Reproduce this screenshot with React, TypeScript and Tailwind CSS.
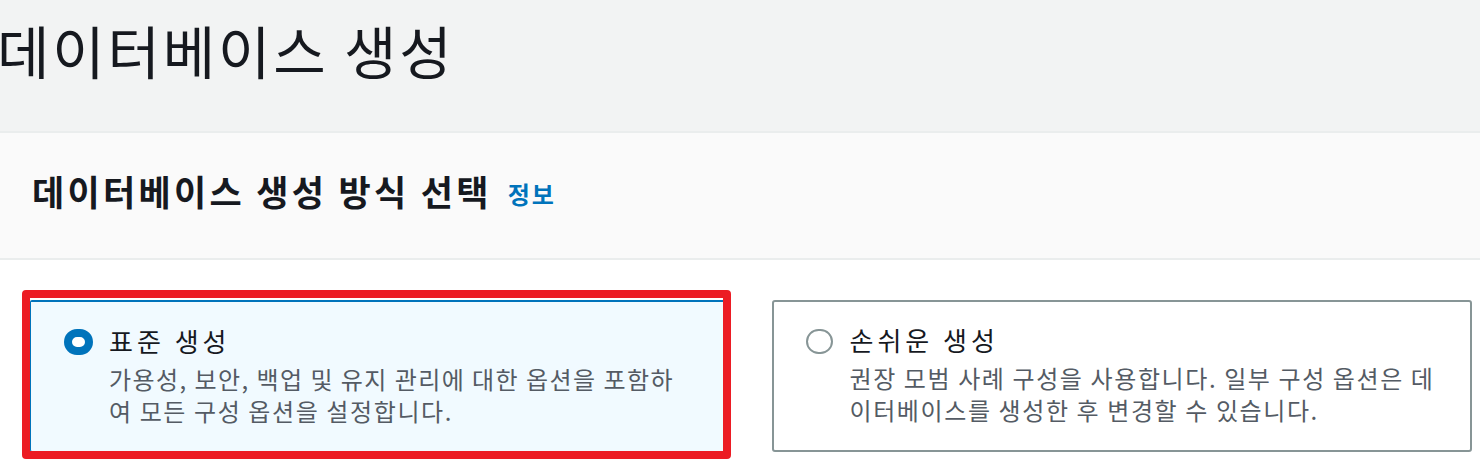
import React from "react";

export default function App() {
  return (
    <div className="w-[1480px] h-[463px] overflow-hidden bg-white font-['Noto_Sans_CJK_KR','Noto_Sans',sans-serif] text-[#16191f]">
      <div className="h-[131px] bg-[#f2f3f3] flex items-center pb-[32px]">
        <h1 className="ml-[-3px] text-[57px] leading-none font-normal tracking-[2.8px] whitespace-nowrap">데이터베이스 생성</h1>
      </div>
      <div className="h-[129px] bg-[#fafafa] border-t-2 border-b-2 border-[#eaeded] flex items-center px-[32px] pb-[10px]">
        <h2 className="text-[35px] leading-none font-bold tracking-[3.3px] whitespace-nowrap">데이터베이스 생성 방식 선택</h2>
        <span className="ml-[16px] text-[24px] leading-none font-bold text-[#0073bb] tracking-[2px] mt-[6px]">정보</span>
      </div>
      <div className="pt-[40px] pl-[30px] pr-[8px] grid grid-cols-2 gap-[41px]">
        <div className="relative h-[152px] bg-[#f1faff] border border-t-2 border-[#0073bb] rounded-[2px]">
          <div className="flex pl-[33px] pt-[26px]">
            <div className="w-[29px] h-[26px] rounded-full border-[8px] border-[#0073bb] bg-white shrink-0 mt-[1px]" />
            <div className="ml-[16px]">
              <div className="text-[26px] leading-[26px] font-normal tracking-[4px] text-[#16191f] whitespace-nowrap">표준 생성</div>
              <div className="mt-[9px] text-[24px] leading-[32px] text-[#545b64] whitespace-nowrap">
                <div className="tracking-[1.45px]">가용성, 보안, 백업 및 유지 관리에 대한 옵션을 포함하</div>
                <div className="tracking-[1.6px]">여 모든 구성 옵션을 설정합니다.</div>
              </div>
            </div>
          </div>
          <div className="absolute left-[-9px] top-[-12px] w-[709px] h-[169px] border-[8px] border-[#ec1c24] rounded-[4px] pointer-events-none" />
        </div>
        <div className="h-[152px] bg-white border-2 border-[#879596] rounded-[3px]">
          <div className="flex pl-[32px] pt-[25px]">
            <div className="w-[27px] h-[25px] rounded-full border-2 border-[#879596] bg-white shrink-0 mt-[2px]" />
            <div className="ml-[17px]">
              <div className="text-[26px] leading-[26px] font-normal tracking-[4px] text-[#16191f] whitespace-nowrap">손쉬운 생성</div>
              <div className="mt-[9px] text-[24px] leading-[32px] text-[#545b64] whitespace-nowrap">
                <div className="tracking-[1.6px]">권장 모범 사례 구성을 사용합니다. 일부 구성 옵션은 데</div>
                <div className="tracking-[1.6px]">이터베이스를 생성한 후 변경할 수 있습니다.</div>
              </div>
            </div>
          </div>
        </div>
      </div>
    </div>
  );
}
